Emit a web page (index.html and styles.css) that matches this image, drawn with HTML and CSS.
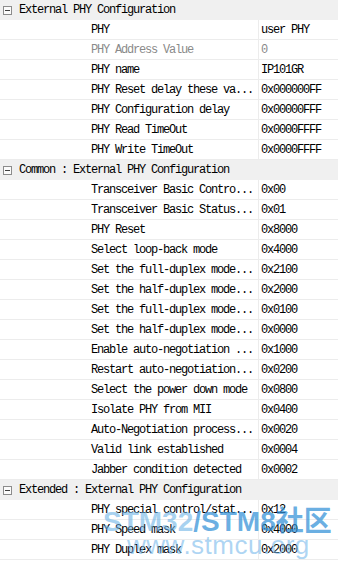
FILE: index.html
```html
<!DOCTYPE html>
<html>
<head>
<meta charset="utf-8">
<link rel="stylesheet" href="styles.css">
</head>
<body>
<div class="grid">
  <div class="group"><span class="toggle"></span><span>External PHY Configuration</span></div>
  <div class="row"><div class="label">PHY</div><div class="value">user PHY</div></div>
  <div class="row dim"><div class="label">PHY Address Value</div><div class="value">0</div></div>
  <div class="row"><div class="label">PHY name</div><div class="value">IP101GR</div></div>
  <div class="row"><div class="label">PHY Reset delay these va...</div><div class="value">0x000000FF</div></div>
  <div class="row"><div class="label">PHY Configuration delay</div><div class="value">0x00000FFF</div></div>
  <div class="row"><div class="label">PHY Read TimeOut</div><div class="value">0x0000FFFF</div></div>
  <div class="row"><div class="label">PHY Write TimeOut</div><div class="value">0x0000FFFF</div></div>

  <div class="group"><span class="toggle"></span><span>Common : External PHY Configuration</span></div>
  <div class="row"><div class="label">Transceiver Basic Contro...</div><div class="value">0x00</div></div>
  <div class="row"><div class="label">Transceiver Basic Status...</div><div class="value">0x01</div></div>
  <div class="row"><div class="label">PHY Reset</div><div class="value">0x8000</div></div>
  <div class="row"><div class="label">Select loop-back mode</div><div class="value">0x4000</div></div>
  <div class="row"><div class="label">Set the full-duplex mode...</div><div class="value">0x2100</div></div>
  <div class="row"><div class="label">Set the half-duplex mode...</div><div class="value">0x2000</div></div>
  <div class="row"><div class="label">Set the full-duplex mode...</div><div class="value">0x0100</div></div>
  <div class="row"><div class="label">Set the half-duplex mode...</div><div class="value">0x0000</div></div>
  <div class="row"><div class="label">Enable auto-negotiation ...</div><div class="value">0x1000</div></div>
  <div class="row"><div class="label">Restart auto-negotiation...</div><div class="value">0x0200</div></div>
  <div class="row"><div class="label">Select the power down mode</div><div class="value">0x0800</div></div>
  <div class="row"><div class="label">Isolate PHY from MII</div><div class="value">0x0400</div></div>
  <div class="row"><div class="label">Auto-Negotiation process...</div><div class="value">0x0020</div></div>
  <div class="row"><div class="label">Valid link established</div><div class="value">0x0004</div></div>
  <div class="row"><div class="label">Jabber condition detected</div><div class="value">0x0002</div></div>

  <div class="group"><span class="toggle"></span><span>Extended : External PHY Configuration</span></div>
  <div class="row"><div class="label">PHY special control/stat...</div><div class="value">0x12</div></div>
  <div class="row"><div class="label">PHY Speed mask</div><div class="value">0x4000</div></div>
  <div class="row"><div class="label">PHY Duplex mask</div><div class="value">0x2000</div></div>
</div>
<div class="watermark">
  <div class="wm-title"><span class="wm-light">STM32</span><span class="wm-dark">/STM8社区</span></div>
  <div class="wm-url">www.stmcu.org</div>
</div>
</body>
</html>
```
FILE: styles.css
```css
html, body {
  margin: 0;
  padding: 0;
  background: #ffffff;
}
body {
  width: 338px;
  height: 568px;
  overflow: hidden;
  position: relative;
  font-family: "Liberation Mono", monospace;
  font-size: 12px;
  letter-spacing: -1.2px;
  color: #000000;
}
.grid {
  display: flex;
  flex-direction: column;
}
.group {
  height: 20px;
  background: #f0f0f0;
  display: flex;
  align-items: center;
  gap: 7px;
  padding-left: 3px;
  line-height: 20px;
}
.toggle {
  width: 7px;
  height: 7px;
  border: 1px solid #8c8c8c;
  background: #fbfbfb;
  position: relative;
  flex: none;
}
.toggle::after {
  content: "";
  position: absolute;
  left: 1px;
  top: 3px;
  width: 5px;
  height: 1px;
  background: #404040;
}
.row {
  height: 19px;
  border-bottom: 1px solid #ececec;
  display: grid;
  grid-template-columns: 258px 1fr;
  line-height: 20px;
}
.label {
  padding-left: 91px;
  white-space: nowrap;
  overflow: hidden;
}
.value {
  border-left: 1px solid #ececec;
  padding-left: 2px;
  white-space: nowrap;
}
.dim {
  color: #8a8a8a;
}
.watermark {
  position: absolute;
  left: 103px;
  top: 506px;
  width: 235px;
  font-family: "Liberation Sans", "Noto Sans CJK SC", sans-serif;
  letter-spacing: 0;
  pointer-events: none;
}
.wm-title {
  font-size: 28px;
  font-weight: bold;
  line-height: 32px;
  white-space: nowrap;
}
.wm-light {
  color: rgba(110, 180, 230, 0.6);
}
.wm-dark {
  color: rgba(50, 145, 215, 0.72);
}
.wm-url {
  font-size: 26px;
  line-height: 26px;
  margin-left: 24px;
  margin-top: -6px;
  letter-spacing: 0.5px;
  color: rgba(120, 185, 235, 0.6);
  white-space: nowrap;
}
```
